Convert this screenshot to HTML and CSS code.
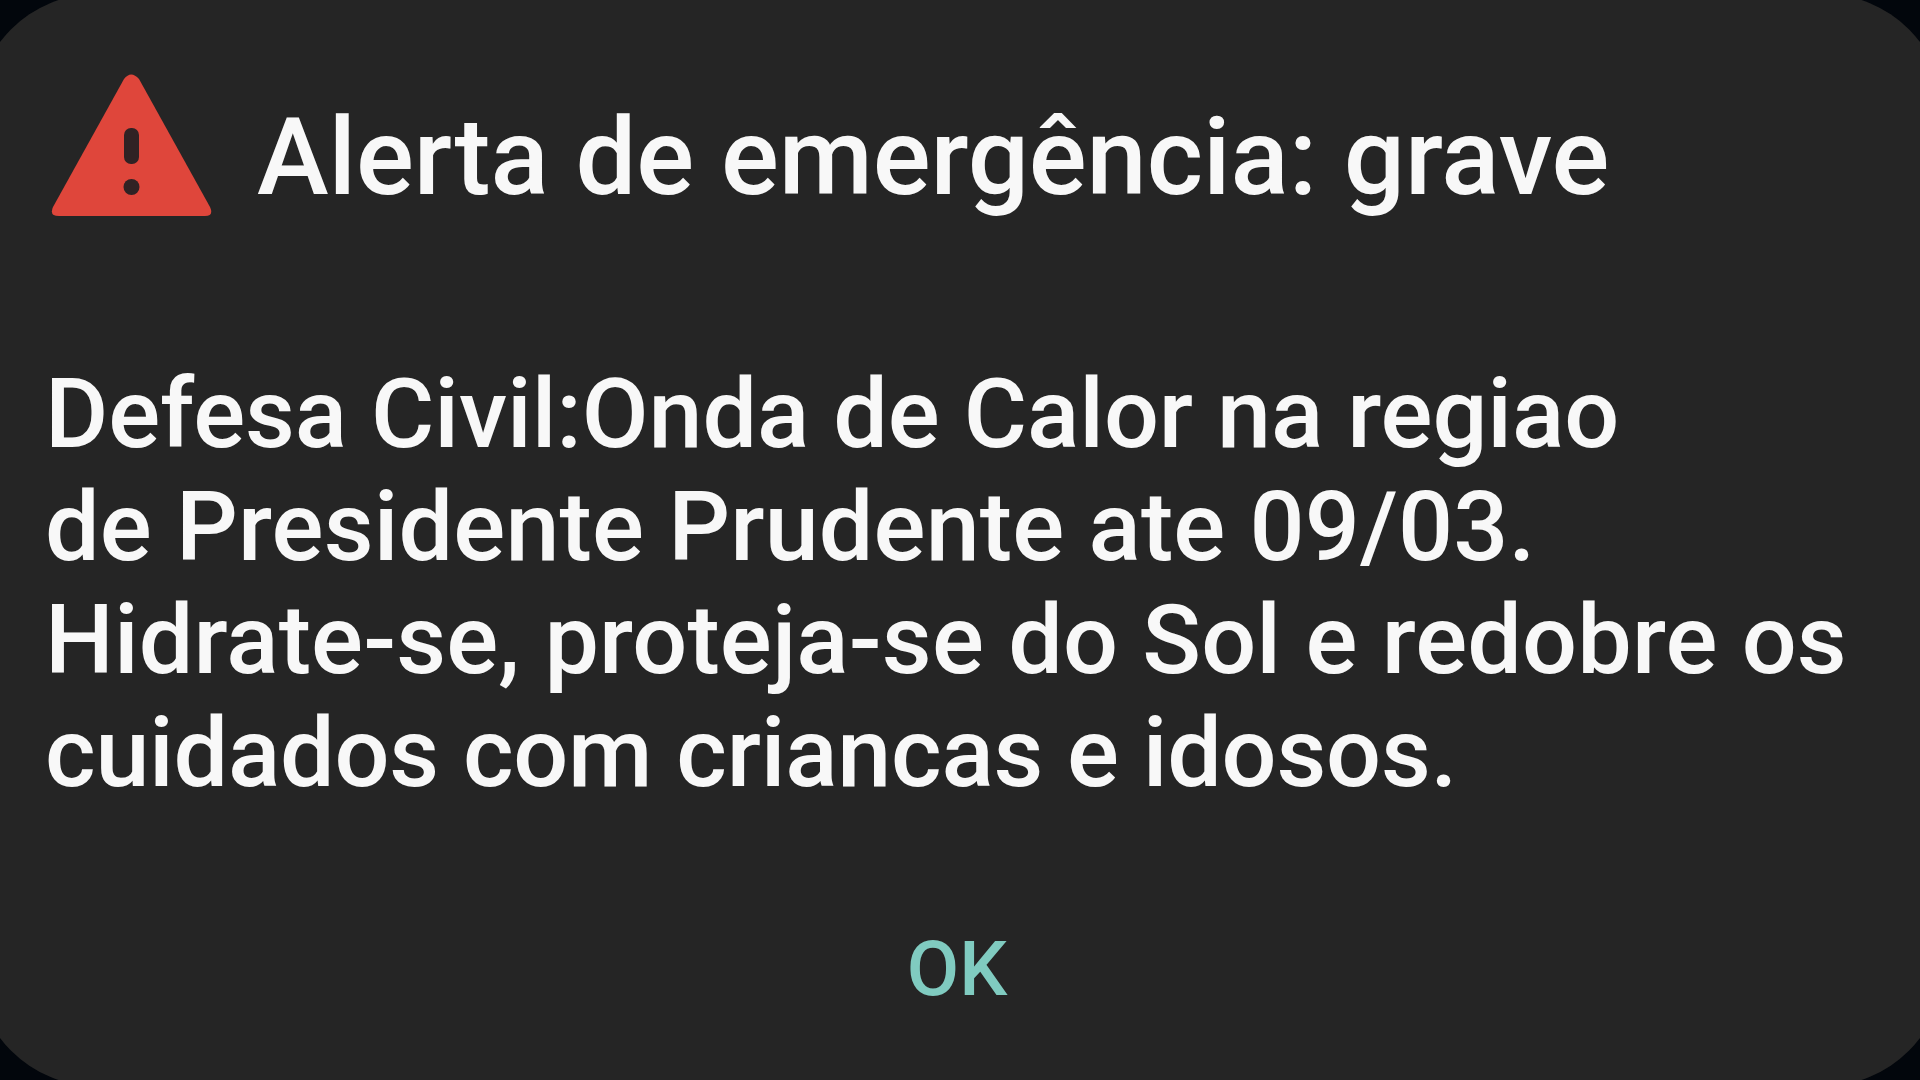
FILE: index.html
```html
<!DOCTYPE html>
<html lang="pt-BR">
<head>
  <meta charset="UTF-8" />
  <meta name="viewport" content="width=device-width, initial-scale=1.0"/>
  <title>Alerta de emergência</title>
  <link rel="stylesheet" href="styles.css">
</head>
<body>
  <div class="alerta">
    <div class="alerta-topo">
      <svg class="icone" viewBox="0 0 162 144" aria-hidden="true">
        <path fill="#df463b" d="M73 5Q80-4 88 5L159 133Q163 142 154 142H8Q-2 142 2 133Z"/>
        <rect x="73" y="54" width="15" height="36" rx="7" fill="#302224"/>
        <circle cx="80.5" cy="113" r="8" fill="#302224"/>
      </svg>
      <h1>Alerta de emergência: grave</h1>
    </div>
    <p class="mensagem">
      <span class="linha">Defesa Civil:Onda de Calor na regiao</span>
      <span class="linha larga">de Presidente Prudente ate 09/03.</span>
      <span class="linha larga">Hidrate-se, proteja-se do Sol e redobre os</span>
      <span class="linha estreita">cuidados com criancas e idosos.</span>
    </p>
    <button class="btn-ok" type="button">OK</button>
  </div>
</body>
</html>
```
FILE: styles.css
```css
* { box-sizing: border-box; }
body {
  margin: 0;
  height: 1080px;
  background: #02060c;
  font-family: Roboto, sans-serif;
  font-weight: 500;
  color: #f8f8f8;
  overflow: hidden;
}
/* o cartão passa um pouco da borda da tela */
.alerta {
  width: 1968px;
  height: 1092px;
  margin: -6px -24px;
  padding: 80px 69px 0;
  background: #252525;
  border-radius: 120px;
  display: flex;
  flex-direction: column;
  align-items: flex-start;
}
.alerta-topo {
  display: flex;
  align-items: flex-start;
  gap: 44px;
  height: 284px;
}
.icone {
  width: 162px;
  height: 144px;
  margin-left: 6px;
}
h1 {
  margin: 25px 0 0;
  font-size: 108px;
  line-height: 116px;
  font-weight: 500;
  letter-spacing: -0.05px;
  white-space: nowrap;
}
.mensagem {
  margin: 0;
  font-size: 97px;
  line-height: 113px;
  letter-spacing: -0.08px;
  white-space: nowrap;
}
.linha {
  display: block;
}
.larga {
  letter-spacing: 0.12px;
}
.estreita {
  letter-spacing: -0.23px;
}
.btn-ok {
  margin: 114px auto 0;
  padding: 0;
  position: relative;
  left: -3px;
  border: none;
  background: none;
  color: #80cbc0;
  font-family: inherit;
  font-size: 76px;
  line-height: 90px;
  font-weight: 500;
}
```
